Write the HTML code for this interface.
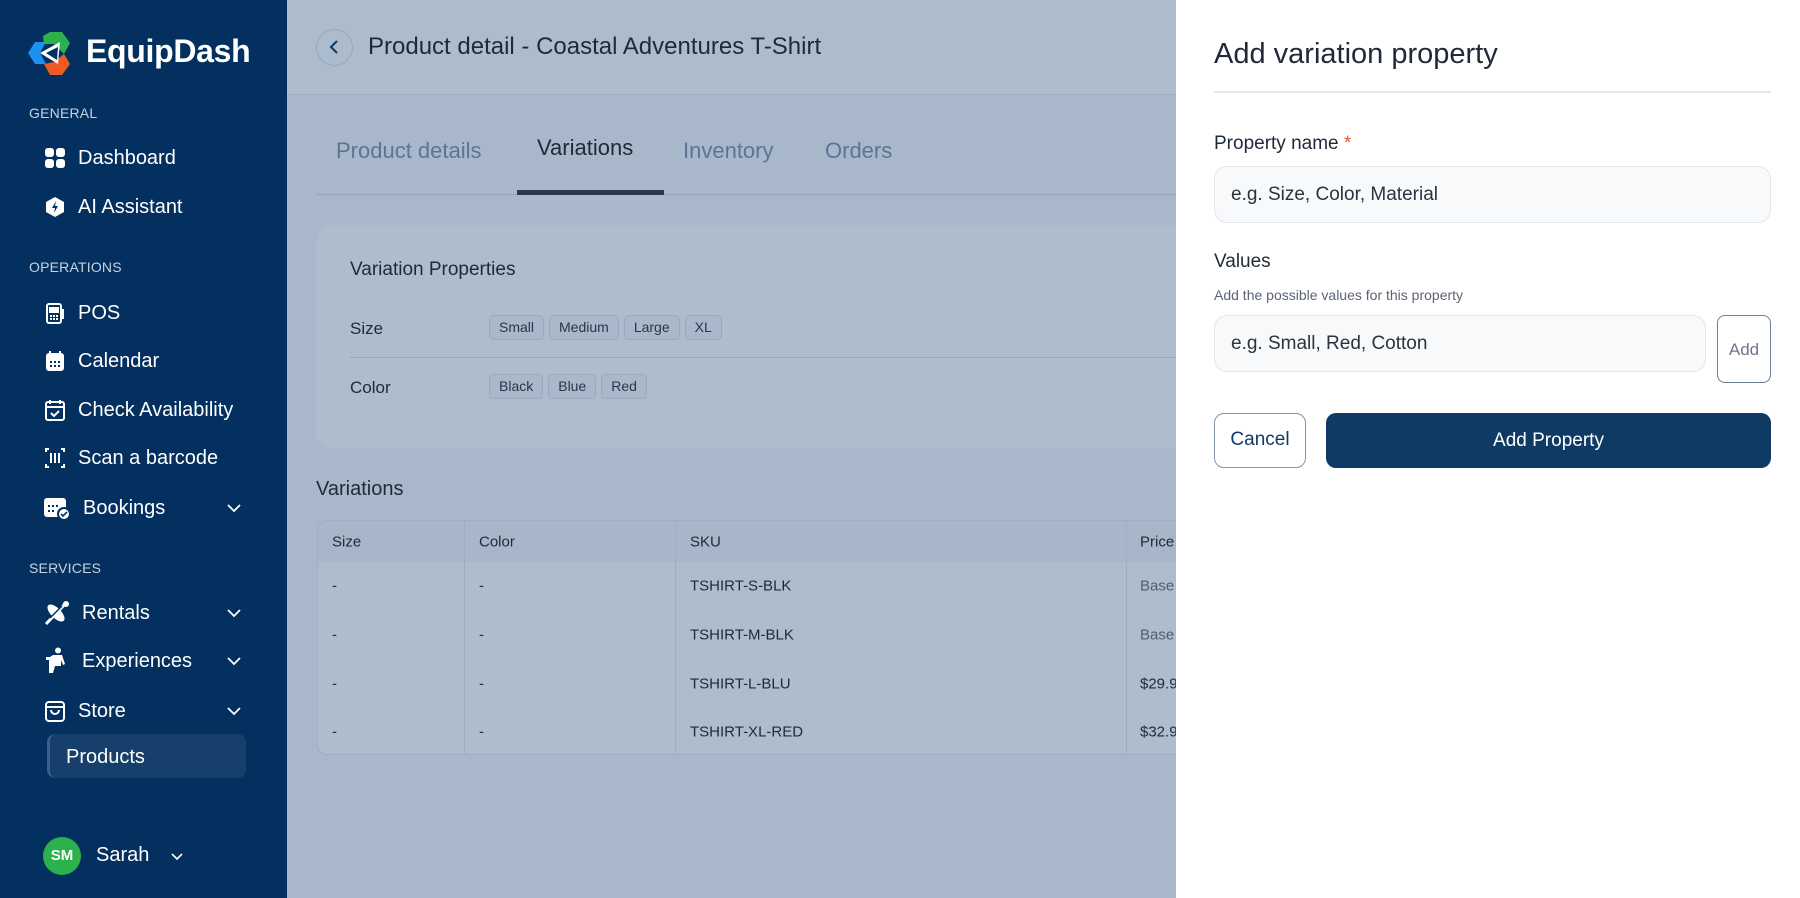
<!DOCTYPE html>
<html><head><meta charset="utf-8"><style>
*{box-sizing:border-box;margin:0;padding:0}
body{width:1800px;height:898px;overflow:hidden;font-family:"Liberation Sans",sans-serif;position:relative;background:#a8b8ca}
.sb{position:absolute;left:0;top:0;width:287px;height:898px;background:#03305f;color:#fff}
.sb .sec{position:absolute;left:29px;font-size:14px;color:#c9d2de;letter-spacing:.2px}
.sb .it{position:absolute;left:44px;font-size:20px;display:flex;align-items:center;height:30px;transform:translateY(-50%)}
.sb .it svg{margin-right:12px}
.chev{position:absolute;left:226px;transform:translateY(-50%)}
.main{position:absolute;left:287px;top:0;width:889px;height:898px;background:#a8b8ca}
.hdr{position:absolute;left:0;top:0;width:889px;height:95px;background:#adbccd;border-bottom:1px solid #9fb0c3}
.abs{position:absolute}
.chip{display:inline-block;height:25px;line-height:23px;padding:0 9px;border:1px solid #98a9bc;background:#a9b9cb;border-radius:5px;font-size:14px;color:#2a3646;margin-right:5px}
.tbl{position:absolute;left:317px;top:520px;width:900px;height:235px;border:1px solid #9dafc2;border-radius:10px;overflow:hidden;background:#adbdce}
.tbl .h{position:absolute;left:0;top:0;width:100%;height:41px;background:#a7b7c9}
.tbl .vl{position:absolute;top:0;width:1px;height:235px;background:#9dafc2}
.tbl .t{position:absolute;font-size:15px;color:#1f2a38;transform:translateY(-50%)}
.dr{position:absolute;left:1176px;top:0;width:624px;height:898px;background:#fff}
.inp{position:absolute;background:#f8f9fa;border:1px solid #e3e6ea;border-radius:13px;font-size:19px;color:#2a3340;padding-left:16px;display:flex;align-items:center}
</style></head><body>
<div class="sb">
 <svg class="abs" style="left:28px;top:32px" width="44" height="43" viewBox="0 0 44 43">
  <polygon points="0,21 7,10 18,10 12,21 18,32 7,32" fill="#1e90f0"/>
  <polygon points="15,4 22,0 34,0 42,11 36,22 26,12 16,12" fill="#2bb24c"/>
  <polygon points="26,30 36,22 42,32 34,43 22,43 16,32" fill="#f15a24"/>
  <polygon points="12,21 32,10 30,32" fill="#fff"/>
  <polygon points="18,21 30,15 29,28" fill="#03305f"/>
 </svg>
 <div class="abs" style="left:86px;top:33px;font-size:32px;font-weight:bold;letter-spacing:-.3px">EquipDash</div>
 <div class="sec" style="top:105px">GENERAL</div>
 <div class="it" style="top:158px"><svg width="22" height="22" viewBox="0 0 22 22" fill="#fff"><rect x="1" y="1" width="9" height="9" rx="3"/><rect x="12" y="1" width="9" height="9" rx="3"/><rect x="1" y="12" width="9" height="9" rx="3"/><rect x="12" y="12" width="9" height="9" rx="3"/></svg>Dashboard</div>
 <div class="it" style="top:207px"><svg width="22" height="22" viewBox="0 0 22 22"><polygon points="11,1 20,6 20,16 11,21 2,16 2,6" fill="#fff"/><path d="M12 5 L8 12 H11 L10 17 L14 10 H11 Z" fill="#03305f"/></svg>AI Assistant</div>
 <div class="sec" style="top:259px">OPERATIONS</div>
 <div class="it" style="top:313px"><svg width="22" height="24" viewBox="0 0 22 24" fill="none" stroke="#fff" stroke-width="2"><rect x="3" y="3" width="14" height="19" rx="2"/><rect x="6" y="7" width="8" height="4" fill="#fff"/><path d="M17 9h2v8h-2"/><path d="M6 15h8M6 18h8" stroke-dasharray="2 1"/></svg>POS</div>
 <div class="it" style="top:361px"><svg width="22" height="24" viewBox="0 0 22 24"><rect x="2" y="4" width="18" height="18" rx="3" fill="#fff"/><path d="M6 2v4M16 2v4" stroke="#fff" stroke-width="2"/><g fill="#03305f"><rect x="6" y="12" width="2" height="2"/><rect x="10" y="12" width="2" height="2"/><rect x="14" y="12" width="2" height="2"/><rect x="6" y="16" width="2" height="2"/><rect x="10" y="16" width="2" height="2"/><rect x="14" y="16" width="2" height="2"/></g></svg>Calendar</div>
 <div class="it" style="top:410px"><svg width="22" height="24" viewBox="0 0 22 24" fill="none" stroke="#fff" stroke-width="2"><rect x="2" y="4" width="18" height="18" rx="2"/><path d="M6 2v4M16 2v4M2 9h18M7 15l3 3 5-5"/></svg>Check Availability</div>
 <div class="it" style="top:458px"><svg width="22" height="24" viewBox="0 0 22 24" fill="none" stroke="#fff" stroke-width="2"><path d="M2 6V3h3M17 3h3v3M2 18v3h3M17 21h3v-3M7 7v10M11 7v10M15 7v10"/></svg>Scan a barcode</div>
 <div class="it" style="top:508px;left:43px"><svg width="28" height="26" viewBox="0 0 28 26"><rect x="1" y="3" width="22" height="19" rx="3" fill="#fff"/><g fill="#03305f"><rect x="5" y="10" width="2" height="2"/><rect x="9" y="10" width="2" height="2"/><rect x="13" y="10" width="2" height="2"/><rect x="5" y="15" width="2" height="2"/><rect x="9" y="15" width="2" height="2"/></g><circle cx="21" cy="19" r="6" fill="#fff" stroke="#03305f" stroke-width="2"/><path d="M18 19l2 2 4-4" stroke="#03305f" stroke-width="1.6" fill="none"/></svg>Bookings</div>
 <svg class="chev" style="top:508px" width="16" height="10" viewBox="0 0 16 10"><path d="M2 2l6 6 6-6" stroke="#fff" stroke-width="1.8" fill="none"/></svg>
 <div class="sec" style="top:560px">SERVICES</div>
 <div class="it" style="top:613px"><svg width="26" height="26" viewBox="0 0 26 26"><ellipse cx="12" cy="13" rx="5" ry="11" transform="rotate(-45 12 13)" fill="#fff"/><path d="M2 24L22 3" stroke="#fff" stroke-width="3"/><circle cx="22" cy="4" r="3" fill="#fff"/><path d="M6 18L18 6" stroke="#03305f" stroke-width="1.5"/></svg>Rentals</div>
 <svg class="chev" style="top:613px" width="16" height="10" viewBox="0 0 16 10"><path d="M2 2l6 6 6-6" stroke="#fff" stroke-width="1.8" fill="none"/></svg>
 <div class="it" style="top:661px"><svg width="26" height="28" viewBox="0 0 26 28" fill="#fff"><circle cx="14" cy="3.5" r="3"/><path d="M9 8h9l3 9-2 1-2-5v6h-6l-2 7H6l2-9h-2V10z"/><path d="M2 10h6v16H5V13H2z"/></svg>Experiences</div>
 <svg class="chev" style="top:661px" width="16" height="10" viewBox="0 0 16 10"><path d="M2 2l6 6 6-6" stroke="#fff" stroke-width="1.8" fill="none"/></svg>
 <div class="it" style="top:711px"><svg width="22" height="24" viewBox="0 0 22 24" fill="none" stroke="#fff" stroke-width="2"><rect x="2" y="3" width="18" height="19" rx="3"/><path d="M2 8h18M7 11a4 4 0 0 0 8 0"/></svg>Store</div>
 <svg class="chev" style="top:711px" width="16" height="10" viewBox="0 0 16 10"><path d="M2 2l6 6 6-6" stroke="#fff" stroke-width="1.8" fill="none"/></svg>
 <div class="abs" style="left:47px;top:734px;width:199px;height:44px;background:#163f6c;border-radius:8px;border-left:3px solid #3a5f88"></div>
 <div class="abs" style="left:66px;top:746px;font-size:20px">Products</div>
 <div class="abs" style="left:43px;top:837px;width:38px;height:38px;border-radius:50%;background:#2bb24c;font-size:15px;font-weight:bold;text-align:center;line-height:38px">SM</div>
 <div class="abs" style="left:96px;top:844px;font-size:20px">Sarah</div>
 <svg class="abs" style="left:170px;top:852px" width="14" height="9" viewBox="0 0 14 9"><path d="M2 2l5 5 5-5" stroke="#fff" stroke-width="1.6" fill="none"/></svg>
</div>
<div class="main">
 <div class="hdr"></div>
 <div class="abs" style="left:29px;top:29px;width:37px;height:37px;border-radius:50%;border:1px solid #97a8bb"></div>
 <svg class="abs" style="left:41px;top:39px" width="12" height="16" viewBox="0 0 12 16"><path d="M9 2L3 8l6 6" stroke="#0f3a64" stroke-width="2" fill="none"/></svg>
 <div class="abs" style="left:81px;top:33px;font-size:24px;color:#1f2a38">Product detail - Coastal Adventures T-Shirt</div>
 <div class="abs" style="left:29px;top:194px;width:860px;height:1px;background:#96a7ba"></div>
 <div class="abs" style="left:49px;top:138px;font-size:22px;color:#5b7494">Product details</div>
 <div class="abs" style="left:250px;top:135px;font-size:22px;color:#1f2a38">Variations</div>
 <div class="abs" style="left:396px;top:138px;font-size:22px;color:#5b7494">Inventory</div>
 <div class="abs" style="left:538px;top:138px;font-size:22px;color:#5b7494">Orders</div>
 <div class="abs" style="left:230px;top:190px;width:147px;height:5px;background:#25384f"></div>
 <div class="abs" style="left:29px;top:225px;width:880px;height:223px;background:#adbdce;border-radius:16px"></div>
 <div class="abs" style="left:63px;top:259px;font-size:19px;color:#1f2a38">Variation Properties</div>
 <div class="abs" style="left:63px;top:319px;font-size:17px;color:#1f2a38">Size</div>
 <div class="abs" style="left:202px;top:315px;white-space:nowrap"><span class="chip">Small</span><span class="chip">Medium</span><span class="chip">Large</span><span class="chip">XL</span></div>
 <div class="abs" style="left:63px;top:357px;width:830px;height:1px;background:#96a7ba"></div>
 <div class="abs" style="left:63px;top:378px;font-size:17px;color:#1f2a38">Color</div>
 <div class="abs" style="left:202px;top:374px;white-space:nowrap"><span class="chip">Black</span><span class="chip">Blue</span><span class="chip">Red</span></div>
 <div class="abs" style="left:29px;top:478px;font-size:20px;color:#1f2a38">Variations</div>
</div>
<div class="tbl">
 <div class="h"></div>
 <div class="vl" style="left:146px"></div><div class="vl" style="left:357px"></div><div class="vl" style="left:808px"></div>
 <div class="t" style="left:14px;top:21px">Size</div><div class="t" style="left:161px;top:21px">Color</div><div class="t" style="left:372px;top:21px">SKU</div><div class="t" style="left:822px;top:21px">Price</div>
 <div class="t" style="left:14px;top:65px">-</div><div class="t" style="left:161px;top:65px">-</div><div class="t" style="left:372px;top:65px">TSHIRT-S-BLK</div><div class="t" style="left:822px;top:65px;color:#4f5e70">Base</div>
 <div class="t" style="left:14px;top:114px">-</div><div class="t" style="left:161px;top:114px">-</div><div class="t" style="left:372px;top:114px">TSHIRT-M-BLK</div><div class="t" style="left:822px;top:114px;color:#4f5e70">Base</div>
 <div class="t" style="left:14px;top:163px">-</div><div class="t" style="left:161px;top:163px">-</div><div class="t" style="left:372px;top:163px">TSHIRT-L-BLU</div><div class="t" style="left:822px;top:163px">$29.99</div>
 <div class="t" style="left:14px;top:211px">-</div><div class="t" style="left:161px;top:211px">-</div><div class="t" style="left:372px;top:211px">TSHIRT-XL-RED</div><div class="t" style="left:822px;top:211px">$32.99</div>
</div>
<div class="dr">
 <div class="abs" style="left:38px;top:38px;font-size:29px;color:#1f2a38">Add variation property</div>
 <div class="abs" style="left:38px;top:91px;width:557px;height:2px;background:#e4e7eb"></div>
 <div class="abs" style="left:38px;top:133px;font-size:19px;color:#1f2a38">Property name <span style="color:#e4572e">*</span></div>
 <div class="inp" style="left:38px;top:166px;width:557px;height:57px">e.g. Size, Color, Material</div>
 <div class="abs" style="left:38px;top:251px;font-size:19px;color:#1f2a38">Values</div>
 <div class="abs" style="left:38px;top:287px;font-size:14px;color:#5a6474">Add the possible values for this property</div>
 <div class="inp" style="left:38px;top:315px;width:492px;height:57px">e.g. Small, Red, Cotton</div>
 <div class="abs" style="left:541px;top:315px;width:54px;height:68px;border:1.5px solid #6f7f93;border-radius:8px;font-size:17px;color:#6b7686;text-align:center;line-height:68px">Add</div>
 <div class="abs" style="left:38px;top:413px;width:92px;height:55px;border:1.5px solid #8595a8;border-radius:10px;font-size:19px;color:#0f3a64;text-align:center;line-height:52px">Cancel</div>
 <div class="abs" style="left:150px;top:413px;width:445px;height:55px;background:#0f3a64;border-radius:10px;font-size:19px;color:#fff;text-align:center;line-height:55px">Add Property</div>
</div>
</body></html>
